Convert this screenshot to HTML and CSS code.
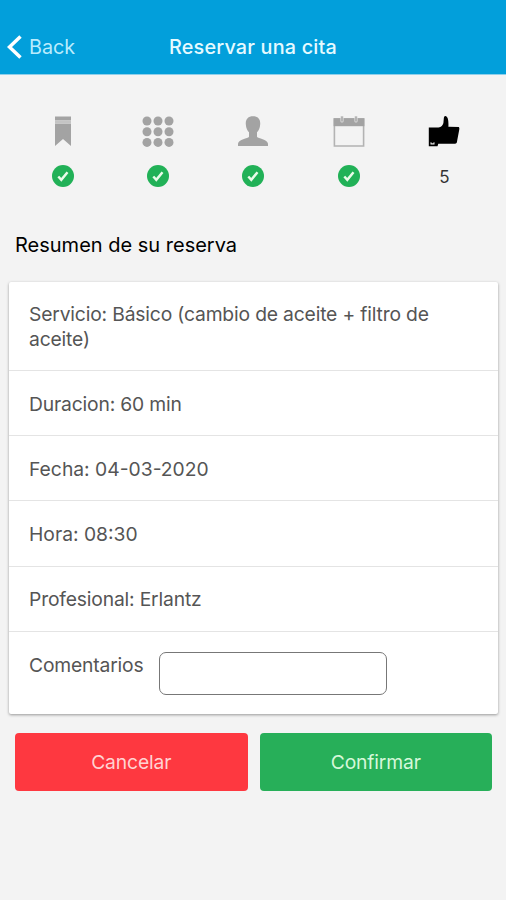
FILE: index.html
```html
<!DOCTYPE html>
<html lang="es">
<head>
<meta charset="utf-8">
<title>Reservar una cita</title>
<link rel="stylesheet" href="styles.css">
</head>
<body>
<header class="bar">
  <a class="back"><svg class="chevron" width="16" height="26" viewBox="0 0 16 26"><path d="M13.500 2.500 2.500 13l11 10.500" fill="none" stroke="#fff" stroke-width="3.500"/></svg><span class="back-label">Back</span></a>
  <h1 class="title">Reservar una cita</h1>
</header>
<main>
  <ol class="steps">
    <li class="step">
      <svg class="icon" viewBox="0 0 32 32"><path d="M8 .5h16v4H8zM8 7.500h16v22.500l-8-7-8 7z" fill="#a3a3a3"/><path d="M8 4.500h16v3H8z" fill="#c4c4c4"/></svg>
      <svg class="check" viewBox="0 0 22 22"><circle cx="11" cy="11" r="11" fill="#21b157"/><path d="m6.300 11.500 3 3.300 6.200-7.600" fill="none" stroke="#e9fbe9" stroke-width="2.500"/></svg>
    </li>
    <li class="step">
      <svg class="icon" viewBox="0 0 32 32" fill="#a3a3a3"><circle cx="5" cy="5" r="4.500"/><circle cx="16" cy="5" r="4.500"/><circle cx="27" cy="5" r="4.500"/><circle cx="5" cy="15.700" r="4.500"/><circle cx="16" cy="15.700" r="4.500"/><circle cx="27" cy="15.700" r="4.500"/><circle cx="5" cy="26.400" r="4.500"/><circle cx="16" cy="26.400" r="4.500"/><circle cx="27" cy="26.400" r="4.500"/></svg>
      <svg class="check" viewBox="0 0 22 22"><circle cx="11" cy="11" r="11" fill="#21b157"/><path d="m6.300 11.500 3 3.300 6.200-7.600" fill="none" stroke="#e9fbe9" stroke-width="2.500"/></svg>
    </li>
    <li class="step">
      <svg class="icon" viewBox="0 0 32 32"><path d="M16 .2c5 0 7.500 3 7.200 8-.2 4-1.700 6.500-3.200 8v4.500c1 2 10.500 2.300 11 7V30H1v-2.300c.5-4.700 10-5 11-7v-4.500c-1.500-1.500-3-4-3.200-8C8.500 3.200 11 .2 16 .2z" fill="#a3a3a3"/></svg>
      <svg class="check" viewBox="0 0 22 22"><circle cx="11" cy="11" r="11" fill="#21b157"/><path d="m6.300 11.500 3 3.300 6.200-7.600" fill="none" stroke="#e9fbe9" stroke-width="2.500"/></svg>
    </li>
    <li class="step">
      <svg class="icon" viewBox="0 0 32 32"><path d="M1.400 3h29.200v27H1.400z" fill="none" stroke="#b3b3b3" stroke-width="1.600"/><path d="M.6 2.200h30.800v8H.6z" fill="#a3a3a3"/><path d="M9 1v4M23 1v4" stroke="#ddd" stroke-width="3.200" stroke-linecap="round"/><path d="M9 1v4M23 1v4" stroke="#aaa" stroke-width="1.600" stroke-linecap="round"/></svg>
      <svg class="check" viewBox="0 0 22 22"><circle cx="11" cy="11" r="11" fill="#21b157"/><path d="m6.300 11.500 3 3.300 6.200-7.600" fill="none" stroke="#e9fbe9" stroke-width="2.500"/></svg>
    </li>
    <li class="step">
      <svg class="icon" viewBox="0 0 32 32"><path d="M.8 11.500h9.700c2.800-.4 4.400-2.400 4.900-4.500l.4-4.500C16 .3 17-.2 17.900.3c1.900.8 2.800 3.500 2.500 10.400l10.400.2c.8.5.6 2.500.2 4l-1.800 9.500c-.2 2.200-.8 3.200-2.200 3.400H10.300l-.8 2.400H.8z"/><path d="M2.500 26.300h4v2.200h-4z" fill="#f3f3f3"/><path d="M3.500 25.800h2v1.500h-2z"/></svg>
      <span class="number">5</span>
    </li>
  </ol>
  <h2 class="heading">Resumen de su reserva</h2>
  <section class="card">
    <div class="row first">Servicio: Básico (cambio de aceite + filtro de aceite)</div>
    <div class="row">Duracion: 60 min</div>
    <div class="row digits">Fecha: 04-03-2020</div>
    <div class="row digits">Hora: 08:30</div>
    <div class="row">Profesional: Erlantz</div>
    <div class="row comments"><label for="comments">Comentarios</label><input id="comments" class="field" type="text"></div>
  </section>
  <div class="actions">
    <button class="button cancel">Cancelar</button>
    <button class="button confirm">Confirmar</button>
  </div>
</main>
</body>
</html>
```

FILE: styles.css
```css
* { box-sizing: border-box; }
body { margin: 0; min-height: 900px; background: #f3f3f3; font-family: Inter, "Liberation Sans", sans-serif; color: #000; }
.bar { display: grid; grid-template-columns: 1fr auto 1fr; align-items: center; height: 75px; padding: 20px 7px 0; background: #029fdb; border-bottom: 1px solid #8fcfea; color: #e6faff; }
.back { display: flex; align-items: center; gap: 6px; font-size: 19.800px; color: #b9ecfd; }
.chevron { display: block; }
.title { margin: 0; font-size: 19.800px; font-weight: 500; letter-spacing: .2px; white-space: nowrap; }
.steps { display: grid; grid-template-columns: repeat(5, 1fr); list-style: none; margin: 0; padding: 41px 14px 0 15px; }
.step { display: flex; flex-direction: column; align-items: center; height: 115px; }
.icon { width: 32px; height: 32px; }
.check { width: 22px; height: 22px; margin-top: 17px; }
.number { margin-top: 19px; font-size: 17px; line-height: 20px; color: #333; }
.heading { margin: 0; padding: 1px 15px 0; font-size: 20px; line-height: 26px; font-weight: 400; }
.card { margin: 24px 8px 0 9px; background: #fff; border-radius: 2px; box-shadow: 0 1px 3px rgba(0, 0, 0, .38); color: #555; }
.row { height: 65.200px; padding: 20.800px 20px 0; font-size: 19.300px; line-height: 25px; letter-spacing: -.17px; border-bottom: 1.500px solid #e4e4e4; }
.digits { letter-spacing: 0; }
.first { height: 89px; padding-top: 20px; }
.comments { display: flex; align-items: flex-start; gap: 15px; height: 82px; border-bottom: 0; }
.field { width: 228px; height: 43px; margin-top: -1px; padding: 0 10px; border: 1.500px solid #777; border-radius: 7px; background: #fff; font: inherit; }
.actions { display: grid; grid-template-columns: 1fr 1fr; gap: 12px; padding: 19px 14px 0 15px; }
.button { height: 58px; padding: 1px 0 0; border: 0; border-radius: 4px; font: 400 19.300px Inter, sans-serif; letter-spacing: -.15px; }
.cancel { background: #fe3840; color: #ffd3d2; }
.confirm { background: #27af59; color: #d6f8da; }
```
